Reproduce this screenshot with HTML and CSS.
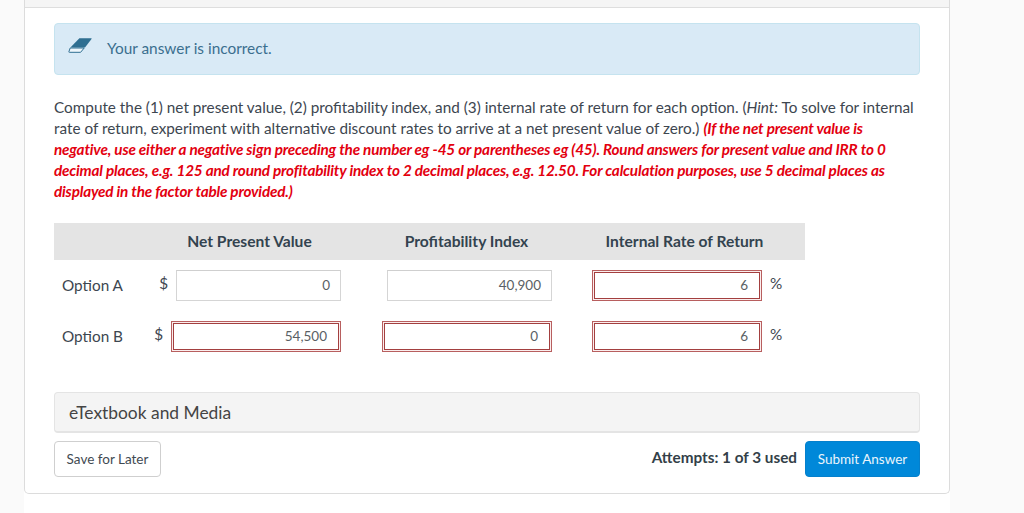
FILE: index.html
```html
<!DOCTYPE html>
<html lang="en">
<head>
<meta charset="utf-8">
<title>Question</title>
<link rel="stylesheet" href="styles.css">
</head>
<body>
<main class="sheet">
  <section class="card">
    <div class="strip"></div>
    <div class="content">
      <div class="notice">
        <svg class="eraser" width="24" height="16" viewBox="0 0 24 16" aria-hidden="true">
          <path d="M11.4 0.3H23.2Q24 0.3 23.5 1L17 9.4H2.4Z" fill="#2f6f91"/>
          <path d="M2.2 10H16.2L12.6 14.3H1.4Q0.4 14.3 1 13.4Z" fill="#eef6fb" stroke="#2f6f91" stroke-width="1"/>
        </svg>
        <span class="notice-text">Your answer is incorrect.</span>
      </div>
      <p class="question">Compute the (1) net present value, (2) profitability index, and (3) internal rate of return for each option. (<em>Hint:</em> To solve for internal<br>rate of return, experiment with alternative discount rates to arrive at a net present value of zero.) <strong>(If the net present value is<br>negative, use either a negative sign preceding the number eg -45 or parentheses eg (45). Round answers for present value and IRR to 0<br>decimal places, e.g. 125 and round profitability index to 2 decimal places, e.g. 12.50. For calculation purposes, use 5 decimal places as<br>displayed in the factor table provided.)</strong></p>
      <div class="grid">
        <div class="head head-blank"></div>
        <div class="head head-npv">Net Present Value</div>
        <div class="head head-pi">Profitability Index</div>
        <div class="head head-irr">Internal Rate of Return</div>

        <div class="label">Option A</div>
        <div class="cell"><span class="unit">$</span><div class="field field-ok">0</div></div>
        <div class="cell"><div class="field field-ok">40,900</div></div>
        <div class="cell"><div class="field field-bad">6</div></div>
        <div class="pct">%</div>

        <div class="label">Option B</div>
        <div class="cell"><span class="unit">$</span><div class="field field-bad">54,500</div></div>
        <div class="cell"><div class="field field-bad">0</div></div>
        <div class="cell"><div class="field field-bad">6</div></div>
        <div class="pct">%</div>
      </div>
      <div class="media">eTextbook and Media</div>
      <div class="actions">
        <button class="save" type="button">Save for Later</button>
        <div class="submit-group">
          <span class="attempts">Attempts: 1 of 3 used</span>
          <button class="submit" type="button">Submit Answer</button>
        </div>
      </div>
    </div>
  </section>
</main>
</body>
</html>
```
FILE: styles.css
```css
* { box-sizing: border-box; }
html, body { margin: 0; height: 513px; overflow: hidden; }
body {
  background: #fafafa;
  font-family: Lato, "Liberation Sans", sans-serif;
  color: #3d4a55;
}
.sheet { width: 926px; height: 513px; margin-left: 24px; background: #fff; }
.card {
  height: 494px;
  border: 1px solid #dcdcdc;
  border-top: 0;
  border-radius: 0 0 5px 5px;
  background: #fff;
}
.strip { height: 8px; background: #f5f5f5; border-bottom: 1px solid #dedede; }
.content { padding: 15px 29px 0; }
.notice {
  height: 52px;
  display: flex;
  align-items: center;
  gap: 15px;
  padding-left: 13px;
  background: #d9eaf6;
  border: 1px solid #c5e3ef;
  border-radius: 4px;
  color: #3b6f8f;
  font-size: 15.4px;
}
.notice-text { margin-top: -2px; }
.eraser { display: block; margin-top: -6px; }
.question {
  margin: 12px 0 0;
  padding-top: 10px;
  font-size: 15.3px;
  line-height: 21px;
  color: #3d4650;
  white-space: nowrap;
}
.question strong { font-weight: 700; font-style: italic; color: #e3000f; letter-spacing: -0.19px; }
.grid {
  display: grid;
  width: 751px;
  margin-top: 21px;
  grid-template-columns: 90px 197px 211px 210px 43px;
  grid-template-rows: 37px 51px 51px;
}
.head {
  display: flex;
  align-items: center;
  justify-content: center;
  padding-bottom: 2px;
  background: #e4e4e4;
  font-size: 15.6px;
  font-weight: 700;
  color: #33434f;
}
.head-npv { padding-left: 14px; }
.head-pi { padding-left: 40px; }
.head-irr { grid-column: span 2; padding: 0 28px 2px 40px; }
.label { font-size: 15.3px; padding: 16px 0 0 8px; color: #3d4650; }
.cell { display: flex; justify-content: flex-end; align-items: flex-start; padding-top: 10px; }
.unit { font-size: 15.3px; color: #3d4650; margin: 4px 8px 0 0; }
.field {
  display: flex;
  align-items: center;
  justify-content: flex-end;
  height: 31px;
  padding-bottom: 1px;
  background: #fff;
  font-size: 13.5px;
  color: #5a5f65;
}
.field-ok { width: 165px; padding-right: 10px; border: 1px solid #d5d5d5; border-top-color: #cfcfcf; }
.field-bad {
  width: 170px;
  padding-right: 13px;
  border: 1px solid #b85f5f;
  box-shadow: inset 0 0 0 1px #fbeeee, inset 0 0 0 2px #a33f3f;
}
.pct { font-size: 15.3px; padding: 14px 0 0 8px; color: #3d4650; }
.media {
  height: 41px;
  margin-top: 30px;
  display: flex;
  align-items: center;
  padding-left: 14px;
  background: #f4f4f4;
  border: 1px solid #e4e4e4;
  border-bottom: 2px solid #e4e4e4;
  border-radius: 4px;
  font-size: 17.4px;
  color: #444;
}
.actions { display: flex; justify-content: space-between; align-items: center; margin-top: 8px; }
.save {
  width: 107px;
  height: 36px;
  padding: 0;
  background: #fff;
  border: 1px solid #cfcfcf;
  border-radius: 4px;
  font: 13.5px Lato, "Liberation Sans", sans-serif;
  color: #3f4a52;
}
.submit-group { display: flex; align-items: center; gap: 8px; }
.attempts { font-size: 15.3px; font-weight: 700; color: #333f48; margin-top: -4px; }
.submit {
  width: 115px;
  height: 36px;
  padding: 0;
  background: #0088d9;
  border: 1px solid #0580cc;
  border-radius: 4px;
  font: 13.5px Lato, "Liberation Sans", sans-serif;
  color: #eaf5fc;
}
```
